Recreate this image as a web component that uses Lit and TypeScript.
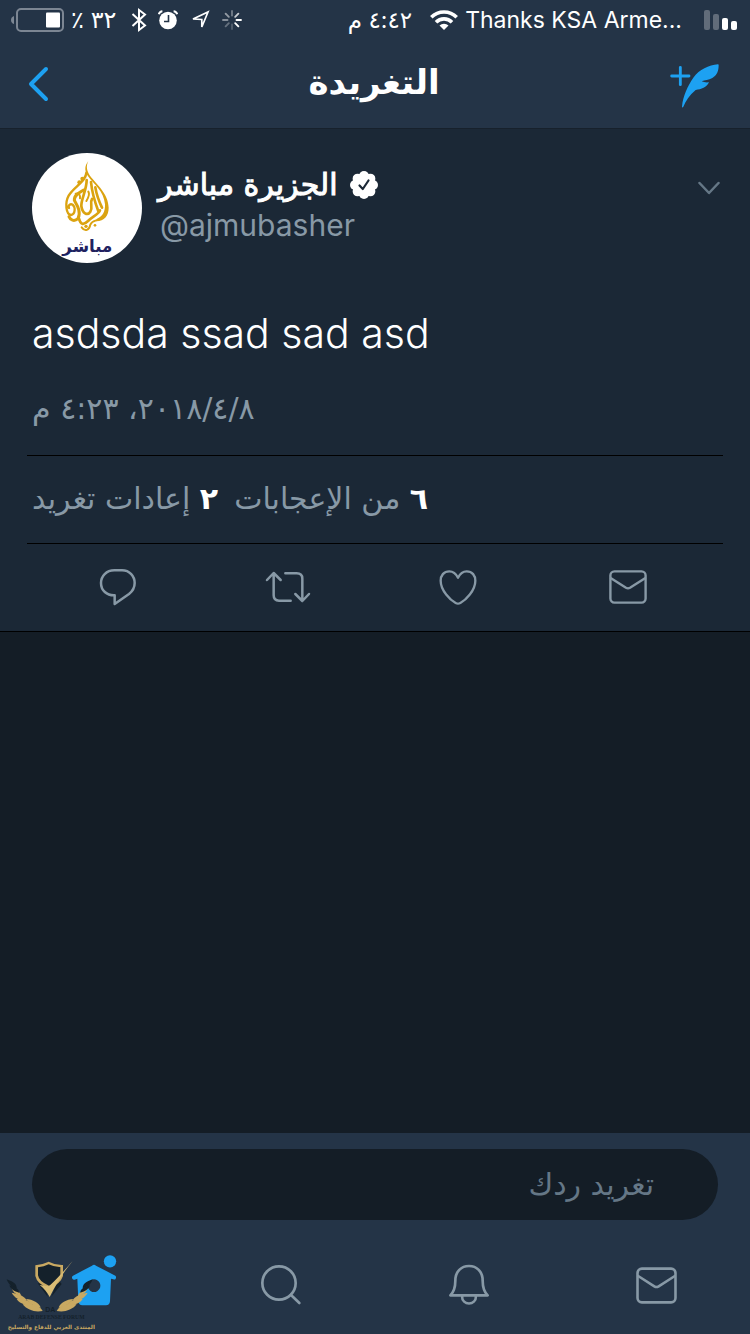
import { LitElement, html, css, svg } from "lit";
import { customElement, property } from "lit/decorators.js";

const envelope = (w: number, h: number) => html`
  <svg width=${w} height=${h} viewBox="0 0 38 34" fill="none" stroke="currentColor" stroke-width="2.4" stroke-linejoin="round" stroke-linecap="round">
    <rect x="1.4" y="1.4" width="35.2" height="31.2" rx="4"></rect>
    <path d="M2 8.2L17 17.8Q19 19 21 17.8L36 8.2"></path>
  </svg>`;

@customElement("status-bar")
class StatusBar extends LitElement {
  static styles = css`
    :host { display: flex; align-items: center; justify-content: space-between; height: 40px; padding: 0 12px 0 11px; color: #fff;
      font-family: Inter, "DejaVu Sans", sans-serif; font-size: 23px; line-height: 32px; }
    .group { display: flex; align-items: center; }
    svg { display: block; }
    .percent { margin: 0 15px 0 6px; font-size: 24px; }
    .alarm { margin: 0 12px 0 11px; }
    .busy { margin-left: 12px; }
    .time { margin-right: 18px; }
    .carrier { margin: 0 22px 0 7px; white-space: nowrap; }
  `;
  render() {
    const rays = [0.35, 0.75, 1, 1, 0.5, 0.2, 0.3, 0.45];
    const angles = [0, 45, 90, 135, 315, 180, 225, 270];
    return html`
      <div class="group">
        <svg width="54" height="24" viewBox="0 0 54 24">
          <path d="M3 8v8Q0 15 0 12T3 8Z" fill="#7c8693"></path>
          <rect x="6" y="1" width="46" height="22" rx="4" fill="none" stroke="#7c8693" stroke-width="2"></rect>
          <rect x="35" y="4.500" width="14" height="15" rx="1" fill="#fff"></rect>
        </svg>
        <span class="percent" dir="rtl">٣٢ ٪</span>
        <svg width="16" height="24" viewBox="0 0 16 24" fill="none" stroke="#fff" stroke-width="2">
          <path d="M1.500 6L14 17.500L8 22V2L14 6.500L1.500 18"></path>
        </svg>
        <svg class="alarm" width="20" height="20" viewBox="0 0 20 20">
          <circle cx="10" cy="10.500" r="8.800" fill="#fff"></circle>
          <path d="M0.800 4.200A4 4 0 0 1 4.400 1.200M15.600 1.200A4 4 0 0 1 19.200 4.200" fill="none" stroke="#fff" stroke-width="2"></path>
          <path d="M10.500 5V11.500H6" fill="none" stroke="#243447" stroke-width="1.600"></path>
        </svg>
        <svg width="20" height="20" viewBox="0 0 20 20" fill="none" stroke="#fff" stroke-width="1.700">
          <path d="M18 2L11.800 17V9.500L3 9Z"></path>
        </svg>
        <svg class="busy" width="20" height="20" viewBox="-10 -10 20 20" stroke="#fff" stroke-width="1.900" stroke-linecap="round">
          ${rays.map((o, i) => svg`<path d="M0 -4.500V-9" opacity=${o} transform="rotate(${angles[i]})"></path>`)}
        </svg>
      </div>
      <div class="group">
        <span class="time" dir="rtl">٤:٤٢ م</span>
        <svg width="28" height="20" viewBox="0 0 28 20" fill="none" stroke="#fff" stroke-width="3.600">
          <path d="M1.300 7.300A18 18 0 0 1 26.700 7.300"></path>
          <path d="M6 12.200A11.300 11.300 0 0 1 22 12.200"></path>
          <path d="M14 20L9.500 15.500A6.400 6.400 0 0 1 18.500 15.500Z" fill="#fff" stroke="none"></path>
        </svg>
        <span class="carrier">Thanks KSA Arme...</span>
        <svg width="34" height="20" viewBox="0 0 34 20" fill="#fff">
          <rect width="6" height="20" rx="2" opacity="0.28"></rect>
          <rect x="9" y="4" width="6" height="16" rx="2" opacity="0.28"></rect>
          <rect x="18" y="8" width="6" height="12" rx="2"></rect>
          <rect x="27" y="11" width="6" height="9" rx="2"></rect>
        </svg>
      </div>`;
  }
}

@customElement("nav-bar")
class NavBar extends LitElement {
  @property() heading = "";
  static styles = css`
    :host { display: grid; grid-template-columns: 1fr auto 1fr; align-items: center; height: 88px; padding: 0 30px 0 28px;
      border-bottom: 1px solid #17212c; color: #1da1f2; }
    button { background: none; border: 0; padding: 0; color: inherit; justify-self: start; }
    .compose { justify-self: end; padding-top: 4px; }
    svg { display: block; }
    h1 { margin: 0; padding-bottom: 4px; color: #fff; font: bold 34px/48px "DejaVu Sans", sans-serif; }
  `;
  render() {
    return html`
      <button aria-label="رجوع">
        <svg width="22" height="36" viewBox="0 0 22 36" fill="none" stroke="currentColor" stroke-width="4" stroke-linecap="round" stroke-linejoin="round">
          <path d="M18 3L3 18L18 33"></path>
        </svg>
      </button>
      <h1 dir="rtl">${this.heading}</h1>
      <button class="compose" aria-label="تغريدة جديدة">
        <svg width="50" height="44" viewBox="358 192 150 132">
          <path d="M363 228H415M389 202V254" stroke="currentColor" stroke-width="8.500" stroke-linecap="round"></path>
          <path fill="currentColor" d="M502 193C474 196 446 208 429 232C411 258 397 288 394 320C394 323 397 323 398 320C405 304 416 286 435 270C452 268 468 262 475 247C467 248 459 247 453 244C462 240 474 240 485 234C500 225 504 212 504 195Q504 193 502 193Z"></path>
        </svg>
      </button>`;
  }
}

@customElement("tweet-card")
class TweetCard extends LitElement {
  static styles = css`
    :host { display: block; background: #1b2836; border-bottom: 1px solid #000; color: #8899a6; font-family: Inter, "DejaVu Sans", sans-serif; }
    svg { display: block; }
    header { display: flex; align-items: flex-start; padding: 24px 30px 0 32px; }
    .who { margin: 12px auto 0 16px; }
    .name { display: flex; align-items: center; gap: 12px; height: 40px; }
    h2 { margin: 0; color: #fff; font: 30px/40px "DejaVu Sans", sans-serif; -webkit-text-stroke: 1px #fff; }
    .handle { display: block; padding-left: 2px; color: inherit; text-decoration: none; font-size: 30px; line-height: 40px; }
    button { background: none; border: 0; padding: 0; color: inherit; }
    .more { margin-top: 28px; }
    .text { margin: 44px 32px 0; color: #fff; font-size: 41px; font-weight: 300; line-height: 52px; }
    .date { margin: 30px 32px 0; font: 30px/40px "DejaVu Sans", sans-serif; direction: rtl; display: flex; justify-content: flex-end; }
    .rule { margin: 26px 27px 0; border: 0; border-top: 1px solid #000; }
    .stats { display: flex; direction: rtl; justify-content: flex-end; gap: 16px; height: 87px; margin: 0 32px; align-items: center;
      font: 30px/40px "DejaVu Sans", sans-serif; }
    .stats a { padding-bottom: 2px; color: inherit; text-decoration: none; white-space: nowrap; }
    .stats b { color: #fff; }
    .stats + .rule { margin-top: 0; }
    .actions { display: grid; grid-template-columns: repeat(4, 1fr); height: 87px; padding: 0 37px 0 33px; }
    .actions button { display: grid; place-items: center; padding-bottom: 2px; }
    .logo { font: bold 50px "DejaVu Sans", sans-serif; }
  `;
  render() {
    return html`
      <article>
        <header>
          <svg width="110" height="110" viewBox="36 39 330 330" role="img" aria-label="الجزيرة مباشر">
            <circle cx="201" cy="204" r="165" fill="#fff"></circle>
            <g fill="none" stroke="#dba310" stroke-linecap="round" stroke-linejoin="round">
              <path stroke="none" fill="#dba310" d="M205 63C195 76 192 90 203 107C222 134 251 151 255 193C256 214 249 229 230 237L229 244C253 243 266 227 266 203C265 160 230 134 210 107C201 94 197 80 205 63Z"></path>
              <path stroke-width="7" d="M199 98C198 125 162 140 146 167C134 189 138 224 153 225C166 224 167 202 158 194C151 190 143 196 147 204"></path>
              <path stroke-width="9" d="M191 150C177 158 162 166 163 181C172 197 184 215 174 236C162 246 151 240 147 230"></path>
              <path stroke-width="8" d="M200 120C200 150 183 178 184 198C187 220 202 229 211 215C220 201 208 190 216 177"></path>
              <path stroke-width="8" d="M213 126C216 158 225 187 235 214M226 142C230 168 240 190 246 203M177 236C181 253 190 257 204 243C216 230 236 223 240 211"></path>
              <path stroke-width="6" d="M185 262C195 276 208 271 211 254C217 240 226 244 235 239M205 155C211 164 204 175 199 183M167 161C178 158 181 166 180 175"></path>
            </g>
            <g fill="#dba310"><circle cx="187" cy="116" r="6"></circle><circle cx="178" cy="127" r="6"></circle><circle cx="225" cy="256" r="4"></circle><circle cx="198" cy="259" r="5"></circle></g>
            <text class="logo" x="202" y="336" text-anchor="middle" fill="#20215f" direction="rtl">مباشر</text>
          </svg>
          <div class="who">
            <div class="name">
              <h2 dir="rtl">الجزيرة مباشر</h2>
              <svg width="28" height="28" viewBox="-14 -14 28 28" role="img" aria-label="حساب موثّق">
                <g fill="#fff">
                  <circle r="11.500"></circle>
                  ${[0, 45, 90, 135, 180, 225, 270, 315].map((a) => svg`<circle cy="-9" r="5" transform="rotate(${a})"></circle>`)}
                </g>
                <path d="M-4.500 0.500L-1.200 4L4.500 -4.500" fill="none" stroke="#1b2836" stroke-width="2.200" stroke-linecap="round" stroke-linejoin="round"></path>
              </svg>
            </div>
            <a class="handle" href="#profile">@ajmubasher</a>
          </div>
          <button class="more" aria-label="المزيد">
            <svg width="22" height="14" viewBox="0 0 22 14" fill="none" stroke="#657786" stroke-width="2.500" stroke-linecap="round" stroke-linejoin="round"><path d="M1.500 2L11 12L20.500 2"></path></svg>
          </button>
        </header>
        <p class="text">asdsda ssad sad asd</p>
        <div class="date"><time datetime="2018-04-08T16:23">٢٠١٨/٤/٨، ٤:٢٣ م</time></div>
        <hr class="rule">
        <div class="stats">
          <a href="#likes"><b>٦</b> من الإعجابات</a>
          <a href="#retweets"><b>٢</b> إعادات تغريد</a>
        </div>
        <hr class="rule">
        <div class="actions">
          <button aria-label="رد">
            <svg width="38" height="38" viewBox="57 54 114 114" fill="none" stroke="currentColor" stroke-width="7.500" stroke-linejoin="round"><path d="M103 61H126C149 61 164 79 164 99C164 114 156 125 147 132L104 162V136C80 137 63 121 63 99C63 78 79 61 103 61Z"></path></svg>
          </button>
          <button aria-label="إعادة تغريد">
            <svg width="46" height="34" viewBox="555 61 138 102" fill="none" stroke="currentColor" stroke-width="7.500" stroke-linejoin="round" stroke-linecap="round"><path d="M561 91L581 70L602 91M581 72V137Q581 153 597 153H632M616 71H650Q667 71 667 87V153M646 133L667 154L687 133"></path></svg>
          </button>
          <button aria-label="إعجاب">
            <svg width="38" height="38" viewBox="57 54 114 114" fill="none" stroke="currentColor" stroke-width="7" stroke-linejoin="round"><path d="M114 83C107 69 98 64 88 64C71 64 62 77 62 92C62 122 91 150 107 159Q114 163 121 159C137 150 166 122 166 92C166 77 157 64 140 64C130 64 121 69 114 83Z"></path></svg>
          </button>
          <button aria-label="رسالة">${envelope(38, 34)}</button>
        </div>
      </article>`;
  }
}

@customElement("bottom-bar")
class BottomBar extends LitElement {
  static styles = css`
    :host { display: block; background: #243447; color: #8899a6; }
    svg { display: block; }
    .reply { display: flex; padding: 16px 32px 0; }
    input { flex: 1; min-width: 0; box-sizing: border-box; height: 71px; border: 0; border-radius: 36px; padding: 0 64px; background: #141d26; color: #fff;
      font: 30px/40px "DejaVu Sans", sans-serif; }
    input::placeholder { color: #657786; opacity: 1; }
    nav { display: grid; grid-template-columns: repeat(4, 1fr); height: 98px; margin-top: 16px; }
    a { display: grid; place-items: center; color: inherit; }
    .home { padding-bottom: 8px; color: #1da1f2; }
  `;
  render() {
    return html`
      <div class="reply"><input type="text" dir="rtl" aria-label="تغريد ردك" placeholder="تغريد ردك"></div>
      <nav>
        <a class="home" href="#home" aria-label="الرئيسية">
          <svg width="46" height="52" viewBox="213 44 138 156" fill="currentColor">
            <circle cx="330" cy="63" r="18.500"></circle>
            <path fill-rule="evenodd" d="M282 73Q285 73 288 76L346 106Q350 109 347 115Q345 119 340 117L333 115L330 183Q329 195 318 195H247Q236 195 235 183L232 115L224 118Q219 119 217 115Q214 109 219 106L276 76Q279 73 282 73ZM282 117A19 19 0 1 0 282.100 117Z"></path>
          </svg>
        </a>
        <a href="#search" aria-label="بحث">
          <svg width="42" height="42" viewBox="63 42 126 126" fill="none" stroke="currentColor" stroke-width="8" stroke-linecap="round"><circle cx="120" cy="99" r="50"></circle><path d="M156 135L181 159"></path></svg>
        </a>
        <a href="#notifications" aria-label="التنبيهات">
          <svg width="42" height="42" viewBox="627 42 126 126" fill="none" stroke="currentColor" stroke-width="8" stroke-linejoin="round"><path d="M634 136C646 124 649 112 649 92C649 64 667 48 690 48C713 48 731 64 731 92C731 112 734 124 746 136ZM669 138C669 168 711 168 711 138"></path></svg>
        </a>
        <a href="#messages" aria-label="الرسائل">${envelope(41, 37)}</a>
      </nav>`;
  }
}

@customElement("forum-mark")
class ForumMark extends LitElement {
  static styles = css`
    :host { display: block; }
    svg { display: block; }
    .da { font: bold 21px "Liberation Sans", sans-serif; }
    .latin { font: bold 17px "Liberation Serif", serif; }
    .arabic { font: bold 17px "DejaVu Sans", sans-serif; }
  `;
  render() {
    const leaves = [
      "M34 141C52 151 62 159 64 168C49 166 39 158 34 141Z",
      "M35 158C55 162 75 169 80 181C61 182 45 176 35 158Z",
      "M50 177C70 175 91 182 97 195C77 197 59 191 50 177Z",
      "M68 193C88 188 118 192 128 213C104 217 83 211 68 193Z",
      "M78 177C98 178 119 189 122 203C106 201 91 193 78 177Z",
    ];
    const dark = ["M20 118C40 125 50 132 50 145C35 141 25 133 20 118Z", "M28 136C46 140 58 149 57 158C42 154 33 148 28 136Z"];
    const wing = svg`
      ${leaves.map((d) => svg`<path fill="#c9a962" d=${d}></path>`)}
      ${dark.map((d) => svg`<path fill="#14212b" d=${d}></path>`)}`;
    return html`
      <svg width="140" height="94" viewBox="0 0 420 282" role="img" aria-label="Arab Defense Forum">
        <g>${wing}</g>
        <g transform="matrix(-1 0 0 1 298 0)">${wing}</g>
        <path fill="#14212b" d="M113 130L143 170L134 131ZM185 132L154 170L174 118Z"></path>
        <path fill="#c9a962" d="M106 76Q127 74 146 65Q167 76 189 75V108Q181 132 147 146Q111 132 106 108Z"></path>
        <path fill="#14212b" d="M114 82Q132 80 146 73Q164 82 181 81V106Q174 126 147 137Q117 125 114 106Z"></path>
        <path fill="#d9bd75" d="M218 63C200 84 181 106 147 139L119 135C133 146 142 158 149 171C172 126 192 94 218 63Z"></path>
        <text class="da" x="151" y="216" text-anchor="middle" fill="#14212b">DA</text>
        <text class="latin" x="154" y="237" text-anchor="middle" fill="#14212b">ARAB DEFENSE FORUM</text>
        <text class="arabic" x="154" y="268" text-anchor="middle" direction="rtl" fill="#c9a962">المنتدى العربي للدفاع والتسليح</text>
      </svg>`;
  }
}

@customElement("app-root")
class AppRoot extends LitElement {
  static styles = css`
    :host { position: relative; display: flex; flex-direction: column; min-height: 100vh; background: #141d26; }
    .top { background: #243447; }
    main { flex: 1; }
    .mark { position: absolute; left: 0; bottom: 0; pointer-events: none; }
  `;
  render() {
    return html`
      <div class="top">
        <status-bar></status-bar>
        <nav-bar heading="التغريدة"></nav-bar>
      </div>
      <main><tweet-card></tweet-card></main>
      <bottom-bar></bottom-bar>
      <forum-mark class="mark"></forum-mark>`;
  }
}
